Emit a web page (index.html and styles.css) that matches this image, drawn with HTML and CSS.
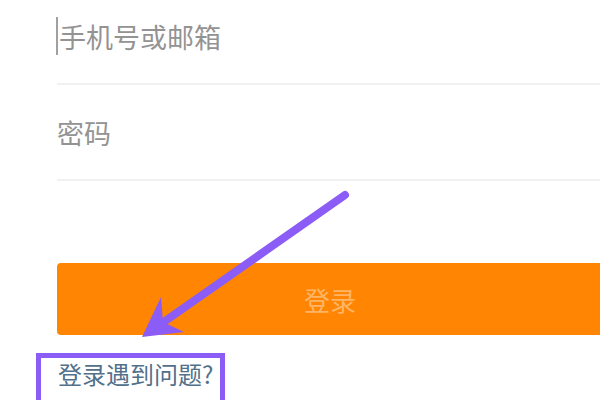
FILE: index.html
```html
<!DOCTYPE html>
<html lang="zh-CN">
<head>
  <meta charset="UTF-8">
  <title>登录</title>
  <link rel="stylesheet" href="styles.css">
</head>
<body>

  <div class="login">
    <div class="field"><span class="caret"></span><span class="hint">手机号或邮箱</span></div>
    <div class="field"><span class="hint">密码</span></div>

    <button class="login-btn">登录</button>

    <div class="help-box">
      <a href="#" class="help-link">登录遇到问题?</a>
    </div>
  </div>

  <!-- annotation arrow -->
  <svg class="arrow" width="600" height="400" viewBox="0 0 600 400">
    <line x1="345" y1="195" x2="158" y2="326" stroke="#8b5cf6" stroke-width="8" stroke-linecap="round"/>
    <polygon points="142,337 161,297 163,322 184,332" fill="#8b5cf6"/>
  </svg>

</body>
</html>
```

FILE: styles.css
```css
body {
  margin: 0;
  background: #fff;
  font-family: "Noto Sans CJK SC", "Noto Sans", sans-serif;
  overflow: hidden;
  width: 600px;
  height: 400px;
  position: relative;
}

.login {
  margin-top: -11px;
  padding-left: 57px;
}

.field {
  height: 96px;
  box-sizing: border-box;
  border-bottom: 2px solid #f1f1f1;
  display: flex;
  align-items: center;
}

.caret {
  display: inline-block;
  width: 2px;
  height: 38px;
  background: #a0a0a0;
  margin-left: -1px;
  margin-right: 1px;
}

.hint {
  font-size: 27px;
  color: #939393;
}

.login-btn {
  display: block;
  margin-top: 82px;
  width: 546px;
  height: 72px;
  border: none;
  border-radius: 4px;
  background: #ff8503;
  color: #ffb565;
  font-family: inherit;
  font-size: 26px;
  padding: 0;
}

.help-box {
  display: inline-block;
  margin-top: 18px;
  margin-left: -21px;
  border: 5px solid #8b5cf6;
  padding: 0 7px 24px 17px;
}

.help-link {
  font-size: 24px;
  line-height: 32px;
  color: #52708a;
  text-decoration: none;
}

.arrow {
  position: absolute;
  left: 0;
  top: 0;
}
```
